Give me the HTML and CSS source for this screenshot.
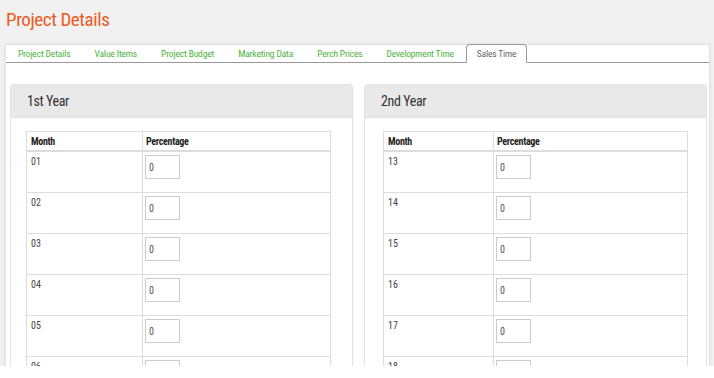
FILE: index.html
```html
<!DOCTYPE html>
<html>
	<head>
		<title>Project Details</title>
		<meta name="viewport" content="width=device-width, initial-scale=1">
		<link rel="stylesheet" href="styles.css">
	</head>
	<body>
		<div class="page">
			<h1 class="page-title">Project Details</h1>
			<div class="panel">
				<ul class="tabs">
					<li><a href="#">Project Details</a></li>
					<li><a href="#">Value Items</a></li>
					<li><a href="#">Project Budget</a></li>
					<li><a href="#">Marketing Data</a></li>
					<li><a href="#">Perch Prices</a></li>
					<li><a href="#">Development Time</a></li>
					<li class="active"><a href="#">Sales Time</a></li>
				</ul>
				<div class="tab-body">
					<div class="year-box">
						<div class="year-head">1st Year</div>
						<div class="year-body">
							<table class="sales">
								<thead>
									<tr><th class="col-month">Month</th><th>Percentage</th></tr>
								</thead>
								<tbody>
									<tr><td>01</td><td><input type="text" value="0"></td></tr>
									<tr><td>02</td><td><input type="text" value="0"></td></tr>
									<tr><td>03</td><td><input type="text" value="0"></td></tr>
									<tr><td>04</td><td><input type="text" value="0"></td></tr>
									<tr><td>05</td><td><input type="text" value="0"></td></tr>
									<tr><td>06</td><td><input type="text" value="0"></td></tr>
									<tr><td>07</td><td><input type="text" value="0"></td></tr>
								</tbody>
							</table>
						</div>
					</div>
					<div class="year-box">
						<div class="year-head">2nd Year</div>
						<div class="year-body">
							<table class="sales">
								<thead>
									<tr><th class="col-month">Month</th><th>Percentage</th></tr>
								</thead>
								<tbody>
									<tr><td>13</td><td><input type="text" value="0"></td></tr>
									<tr><td>14</td><td><input type="text" value="0"></td></tr>
									<tr><td>15</td><td><input type="text" value="0"></td></tr>
									<tr><td>16</td><td><input type="text" value="0"></td></tr>
									<tr><td>17</td><td><input type="text" value="0"></td></tr>
									<tr><td>18</td><td><input type="text" value="0"></td></tr>
									<tr><td>19</td><td><input type="text" value="0"></td></tr>
								</tbody>
							</table>
						</div>
					</div>
				</div>
			</div>
		</div>
	</body>
</html>
```

FILE: styles.css
```css
html, body {
	margin: 0;
	padding: 0;
	background: #fff;
	font-family: "Roboto Condensed", "Liberation Sans Narrow", Roboto, sans-serif;
}
.page {
	height: 366px;
	overflow: hidden;
	background: #f1f1f1;
}
.page-title {
	margin: 0;
	height: 44px;
	box-sizing: border-box;
	padding: 8px 6px 0;
	font-size: 19px;
	line-height: 24px;
	letter-spacing: -0.4px;
	font-weight: normal;
	color: #ec5a1f;
}
.panel {
	margin: 0 4px 0 5px;
	height: 400px;
	background: #fff;
	border: 1px solid #e2e2e2;
	box-shadow: 0 0 3px rgba(0, 0, 0, .08);
}
.tabs {
	display: flex;
	margin: 0;
	padding: 0;
	list-style: none;
	border-bottom: 1px solid #999;
}
.tabs li a {
	display: block;
	padding: 0 12px;
	line-height: 17px;
	font-size: 9.5px;
	letter-spacing: -0.15px;
	color: #4cb43a;
	text-decoration: none;
}
.tabs li.active a {
	padding: 0 10px;
	color: #666;
	border: 1px solid #999;
	border-bottom-color: #fff;
	border-radius: 4px 4px 0 0;
	margin-bottom: -1px;
	margin-top: -1px;
}
.tab-body {
	display: grid;
	grid-template-columns: 1fr 1fr;
	gap: 11px;
	padding: 21px 2px 0 4px;
}
.year-box {
	border: 1px solid #e3e3e3;
	border-radius: 3px;
	box-shadow: 0 1px 2px rgba(0, 0, 0, .06);
}
.year-head {
	height: 32px;
	padding-left: 16px;
	line-height: 32px;
	font-size: 14px;
	letter-spacing: -0.4px;
	color: #333;
	background: #e9e9e9;
	border-bottom: 1px solid #e0e0e0;
	border-radius: 3px 3px 0 0;
}
.year-body {
	padding: 13px 0 0 15px;
}
.year-box + .year-box .year-body {
	padding-left: 18px;
}
.sales {
	width: 305px;
	border-collapse: collapse;
	border: 1px solid #ddd;
	font-size: 10px;
	color: #444;
}
.sales th {
	height: 18px;
	padding: 0 3px 0 4px;
	text-align: left;
	letter-spacing: -0.3px;
	color: #222;
	border: 1px solid #ddd;
	border-bottom-width: 2px;
}
.sales th + th {
	padding-left: 3px;
}
.sales .col-month {
	width: 108px;
}
.year-box + .year-box .col-month {
	width: 102px;
}
.sales td {
	height: 34px;
	padding: 3px 3px 3px 4px;
	vertical-align: top;
	line-height: 13px;
	border: 1px solid #ddd;
}
.sales td + td {
	padding-left: 2px;
}
.sales input {
	width: 35px;
	height: 24px;
	box-sizing: border-box;
	padding: 0 3px;
	border: 1px solid #ccc;
	font-family: inherit;
	font-size: 10px;
	color: #555;
}
```
